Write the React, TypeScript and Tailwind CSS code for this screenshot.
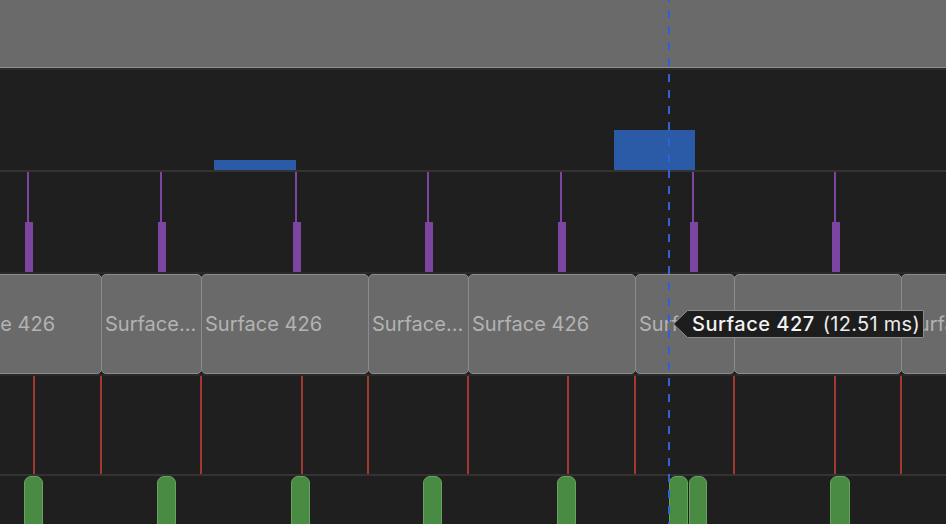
const blueBars = [
  { left: 214, width: 82, height: 10 },
  { left: 614, width: 81, height: 40 },
];

const vsyncMarks = [25, 158, 293, 425, 558, 690, 832];

// widths include the shared 1px border between neighbours
const surfaces = [
  { width: 168, label: "Surface 426" },
  { width: 101, label: "Surface 427" },
  { width: 168, label: "Surface 426" },
  { width: 101, label: "Surface 427" },
  { width: 168, label: "Surface 426" },
  { width: 100, label: "Surface 427" },
  { width: 168, label: "Surface 426" },
  { width: 168, label: "Surface 427" },
];

const redLines = [33, 100, 200, 301, 367, 467, 567, 634, 733, 834, 900];

const greenBars = [
  { left: 24, width: 19 },
  { left: 157, width: 19 },
  { left: 291, width: 19 },
  { left: 423, width: 19 },
  { left: 557, width: 19 },
  { left: 669, width: 19 },
  { left: 689, width: 18 },
  { left: 830, width: 20 },
];

export default function App() {
  return (
    <div className="relative w-[946px] h-[524px] overflow-hidden bg-[#1f1f1f] font-['Inter',sans-serif]">
      {/* header band */}
      <div className="h-[67px] bg-[#6a6a6a]" />
      <div className="h-px bg-[#8f8f8f]" />
      <div className="h-[2px] bg-[#2a2a2a]" />

      {/* gpu bars */}
      <div className="relative h-[100px]">
        {blueBars.map((b) => (
          <div
            key={b.left}
            className="absolute bottom-0 bg-[#2b5ba6]"
            style={{ left: b.left, width: b.width, height: b.height }}
          />
        ))}
      </div>
      <div className="h-[2px] bg-[#333333]" />

      {/* vsync */}
      <div className="relative h-[100px]">
        {vsyncMarks.map((x) => (
          <div key={x} className="absolute top-0 h-full" style={{ left: x }}>
            <div className="ml-[2px] w-[2px] h-[50px] bg-[#7b45a1]" />
            <div className="w-[8px] h-[50px] bg-[#7b45a1]" />
          </div>
        ))}
      </div>
      <div className="h-[2px] bg-[#2a2a2a]" />

      {/* surfaces */}
      <div className="flex h-[100px] -ml-[66px]">
        {surfaces.map((s, i) => (
          <div
            key={i}
            className="shrink-0 -mr-px flex items-center rounded-[5px] border border-[#8c8c8c] bg-[#6a6a6a] pl-[3px] pr-[3px] overflow-hidden"
            style={{ width: s.width }}
          >
            <span className="truncate text-[20px] text-[#b3b3b3] leading-none">{s.label}</span>
          </div>
        ))}
      </div>
      <div className="h-[2px] bg-[#2a2a2a]" />

      {/* present fences */}
      <div className="relative h-[98px]">
        {redLines.map((x) => (
          <div key={x} className="absolute top-0 h-full w-[2px] bg-[#a03a31]" style={{ left: x }} />
        ))}
      </div>
      <div className="h-[2px] bg-[#333333]" />

      {/* cpu work */}
      <div className="relative h-[48px]">
        {greenBars.map((g) => (
          <div
            key={g.left}
            className="absolute top-0 h-[60px] rounded-t-[7px] border border-[#66a35e] bg-[#4a8b43]"
            style={{ left: g.left, width: g.width }}
          />
        ))}
      </div>

      {/* cursor */}
      <div className="absolute top-0 bottom-0 left-[668px] w-[2px] z-10 bg-[repeating-linear-gradient(to_bottom,#2f62d3_0_2px,transparent_2px_10px,#2f62d3_10px_16px)]" />

      {/* tooltip */}
      <div className="absolute left-[673px] top-[310px] w-[251px] h-[28px] z-20 flex items-center pl-[19px] gap-[8px]">
        <svg className="absolute inset-0" width="251" height="28" viewBox="0 0 251 28">
          <polygon points="0.5,14 14.5,0.5 250.5,0.5 250.5,27.5 14.5,27.5" fill="#1d1d1d" stroke="#8c8c8c" strokeWidth="1" />
        </svg>
        <span className="relative text-[20px] font-medium tracking-[0.5px] text-[#f2f2f2] leading-none">Surface 427</span>
        <span className="relative text-[20px] tracking-[0.3px] text-[#ececec] leading-none">(12.51 ms)</span>
      </div>
    </div>
  );
}
